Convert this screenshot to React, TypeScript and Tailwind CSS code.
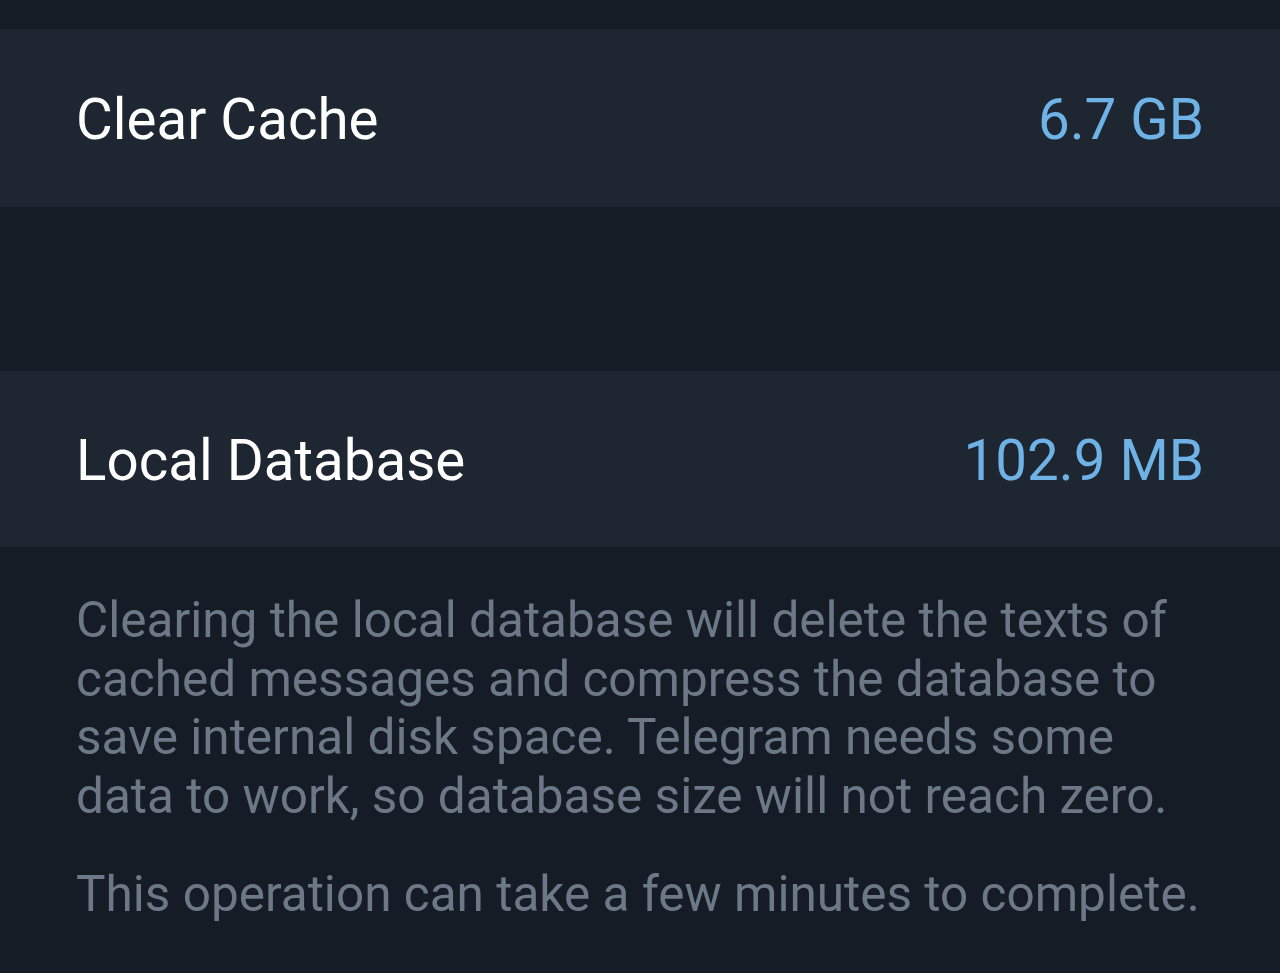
export default function App() {
  const font = { fontFamily: 'Roboto, "Noto Sans", sans-serif' };
  return (
    <div className="w-[1280px] h-[973px] overflow-hidden bg-[#161c26] flex flex-col" style={font}>
      <div className="h-[29px]" />
      <div className="h-[178px] bg-[#1e2632] flex items-center justify-between pl-[76px] pr-[76px] pt-[4px]">
        <span className="text-[56.5px] leading-none text-white">Clear Cache</span>
        <span className="text-[56.5px] leading-none text-[#6fb2e6]">6.7 GB</span>
      </div>
      <div className="h-[164px]" />
      <div className="h-[176px] bg-[#1e2632] flex items-center justify-between pl-[76px] pr-[76px] pt-[4px]">
        <span className="text-[56.5px] leading-none text-white">Local Database</span>
        <span className="text-[56.5px] leading-none text-[#6fb2e6]">102.9 MB</span>
      </div>
      <div className="pl-[76px] pr-[72px] pt-[44px] text-[49.5px] leading-[58.5px] text-[#6c7886]">
        <p>
          Clearing the local database will delete the texts of cached messages and compress the database to save internal disk space. Telegram needs some data to work, so database size will not reach zero.
        </p>
        <p className="mt-[40px]">This operation can take a few minutes to complete.</p>
      </div>
    </div>
  );
}
